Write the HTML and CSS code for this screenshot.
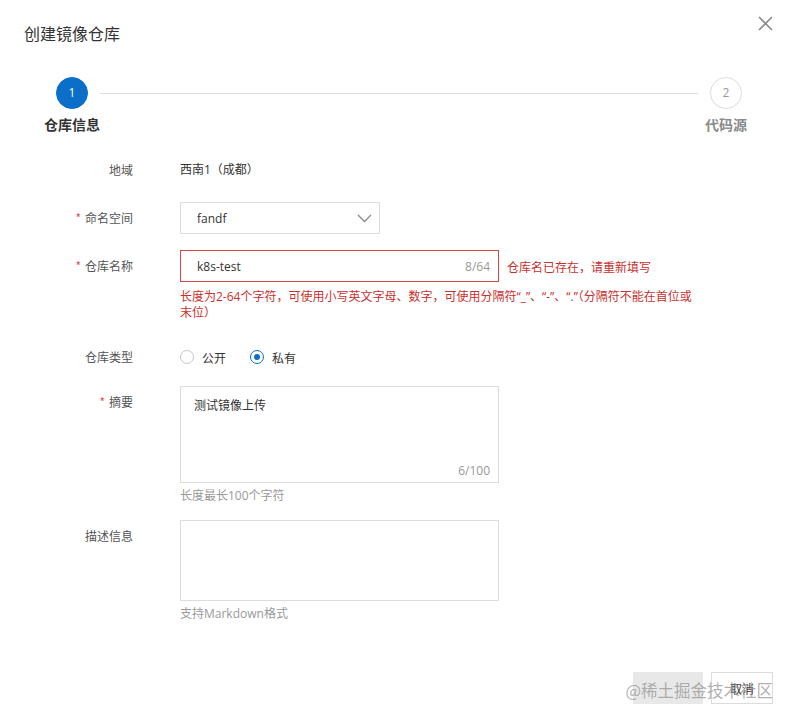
FILE: index.html
```html
<!DOCTYPE html>
<html lang="zh-CN">
<head>
<meta charset="utf-8">
<title>创建镜像仓库</title>
<link rel="stylesheet" href="styles.css">
</head>
<body>
<div class="dialog">
  <div class="header">
    <div class="title">创建镜像仓库</div>
    <button class="close" aria-label="关闭">
      <svg width="15" height="15" viewBox="0 0 15 15"><path d="M1 1 L14 14 M14 1 L1 14" stroke="#8a8a8a" stroke-width="1.6" fill="none"/></svg>
    </button>
  </div>

  <div class="steps">
    <div class="circle active">1</div>
    <div class="line"></div>
    <div class="circle">2</div>
    <div class="step-label active">仓库信息</div>
    <div></div>
    <div class="step-label">代码源</div>
  </div>

  <div class="form">
    <div class="row">
      <div class="label">地域</div>
      <div class="control text">西南1（成都）</div>
    </div>

    <div class="row">
      <div class="label"><span class="req">*</span>命名空间</div>
      <div class="control">
        <div class="select">
          <span>fandf</span>
          <svg width="15" height="9" viewBox="0 0 15 9"><path d="M1 1 L7.5 7.5 L14 1" stroke="#8a8a8a" stroke-width="1.4" fill="none"/></svg>
        </div>
      </div>
    </div>

    <div class="row">
      <div class="label"><span class="req">*</span>仓库名称</div>
      <div class="control">
        <div class="input-line">
          <div class="input error">
            <span>k8s-test</span>
            <span class="count">8/64</span>
          </div>
          <span class="err-msg">仓库名已存在，请重新填写</span>
        </div>
        <div class="help err">长度为2-64个字符，可使用小写英文字母、数字，可使用分隔符“_”、“-”、“.”（分隔符不能在首位或<br>末位）</div>
      </div>
    </div>

    <div class="row row-radio">
      <div class="label">仓库类型</div>
      <div class="control radios">
        <label class="radio"><span class="dot"></span>公开</label>
        <label class="radio checked"><span class="dot"></span>私有</label>
      </div>
    </div>

    <div class="row">
      <div class="label"><span class="req">*</span>摘要</div>
      <div class="control">
        <div class="textarea tall">
          <span>测试镜像上传</span>
          <span class="count">6/100</span>
        </div>
        <div class="help">长度最长100个字符</div>
      </div>
    </div>

    <div class="row">
      <div class="label">描述信息</div>
      <div class="control">
        <div class="textarea short"></div>
        <div class="help">支持Markdown格式</div>
      </div>
    </div>
  </div>

  <div class="footer">
    <button class="btn primary-disabled">确定</button>
    <button class="btn">取消</button>
  </div>

  <div class="watermark">@稀土掘金技术社区</div>
</div>
</body>
</html>
```

FILE: styles.css
```css
* { box-sizing: border-box; }

html, body {
  margin: 0;
  padding: 0;
  background: #fff;
}

body {
  font-family: "Open Sans", "Noto Sans CJK SC", sans-serif;
  color: #333;
  font-size: 12px;
}

.dialog {
  position: relative;
  width: 792px;
  height: 719px;
  background: #fff;
  overflow: hidden;
}

.header {
  display: flex;
  justify-content: space-between;
  align-items: flex-start;
  padding: 16px 19px 0 24px;
}

.title {
  margin-top: 7px;
  font-size: 16px;
  line-height: 20px;
  color: #333;
  font-family: "Noto Sans CJK SC", sans-serif;
}

.close {
  width: 15px;
  height: 15px;
  padding: 0;
  border: 0;
  background: none;
  display: block;
}
.close svg { display: block; }

.steps {
  margin-top: 34px;
  padding: 0 34px 0 40px;
  display: grid;
  grid-template-columns: 64px 1fr 64px;
  grid-template-rows: 32px 20px;
  row-gap: 5px;
  justify-items: center;
}

.circle {
  width: 32px;
  height: 32px;
  border-radius: 50%;
  border: 1px solid #dcdcdc;
  color: #999;
  font-size: 12px;
  line-height: 30px;
  text-align: center;
  background: #fff;
}
.circle.active {
  background: #0b6fc9;
  border-color: #0b6fc9;
  color: #fff;
}

.line {
  align-self: center;
  justify-self: stretch;
  height: 1px;
  background: #dddddd;
  margin: 0 -4px;
}

.step-label {
  font-family: "Noto Sans CJK SC", sans-serif;
  font-size: 14px;
  line-height: 20px;
  font-weight: bold;
  color: #8a8a8a;
  white-space: nowrap;
}
.step-label.active { color: #333; }

.form {
  margin-top: 20px;
}

.row {
  display: grid;
  grid-template-columns: 133px auto;
  column-gap: 47px;
  align-items: start;
  margin-bottom: 16px;
}

.label {
  text-align: right;
  line-height: 32px;
  font-size: 12px;
  color: #555;
  font-family: "Noto Sans CJK SC", sans-serif;
}

.req {
  color: #d9534f;
  margin-right: 4px;
}

.control.text {
  line-height: 32px;
  color: #333;
}

.select {
  width: 200px;
  height: 32px;
  border: 1px solid #dcdcdc;
  padding: 0 7px 0 16px;
  display: flex;
  align-items: center;
  justify-content: space-between;
  color: #333;
}
.select svg { display: block; }

.input-line {
  display: flex;
  align-items: center;
  gap: 8px;
}

.input {
  width: 319px;
  height: 32px;
  border: 1px solid #dcdcdc;
  padding: 0 8px 0 16px;
  display: flex;
  align-items: center;
  justify-content: space-between;
  color: #333;
}
.input.error { border-color: #d64545; }

.count {
  color: #999;
}

.err-msg {
  color: #c9302c;
  font-family: "Noto Sans CJK SC", sans-serif;
  white-space: nowrap;
}

.help {
  margin-top: 5px;
  line-height: 16px;
  color: #999;
  font-family: "Open Sans", "Noto Sans CJK SC", sans-serif;
}
.help.err {
  margin-top: 7px;
  margin-bottom: 4px;
  color: #c9302c;
  white-space: nowrap;
}

.row-radio { margin-bottom: 13px; }

.radios {
  height: 32px;
  display: flex;
  align-items: center;
  gap: 24px;
}

.radio {
  display: flex;
  align-items: center;
  gap: 8px;
  color: #333;
  font-family: "Noto Sans CJK SC", sans-serif;
}

.dot {
  width: 14px;
  height: 14px;
  border-radius: 50%;
  border: 1px solid #c8c8c8;
  background: #fff;
  position: relative;
  flex: none;
}
.radio.checked .dot {
  border-color: #0b6fc9;
}
.radio.checked .dot::after {
  content: "";
  position: absolute;
  left: 3px;
  top: 3px;
  width: 6px;
  height: 6px;
  border-radius: 50%;
  background: #0b6fc9;
}

.textarea {
  width: 319px;
  border: 1px solid #dcdcdc;
  display: flex;
  flex-direction: column;
  justify-content: space-between;
  padding: 11px 8px 3px 13px;
  line-height: 16px;
  color: #333;
}
.textarea.tall { height: 97px; }
.textarea.short { height: 81px; }
.textarea .count {
  align-self: flex-end;
}

.footer {
  position: absolute;
  right: 19px;
  top: 672px;
  display: flex;
  gap: 8px;
}

.btn {
  height: 32px;
  min-width: 62px;
  padding: 0 16px;
  border: 1px solid #dcdcdc;
  background: #fff;
  color: #333;
  font-size: 12px;
  font-family: "Noto Sans CJK SC", sans-serif;
}
.btn.primary-disabled {
  width: 70px;
  background: #e8e8e8;
  border-color: #e8e8e8;
  color: #e8e8e8;
}

.watermark {
  position: absolute;
  right: 19px;
  top: 679px;
  font-size: 16.5px;
  line-height: 22px;
  color: rgba(150, 150, 150, 0.75);
  font-family: "Noto Sans CJK SC", sans-serif;
  pointer-events: none;
  white-space: nowrap;
}
```
